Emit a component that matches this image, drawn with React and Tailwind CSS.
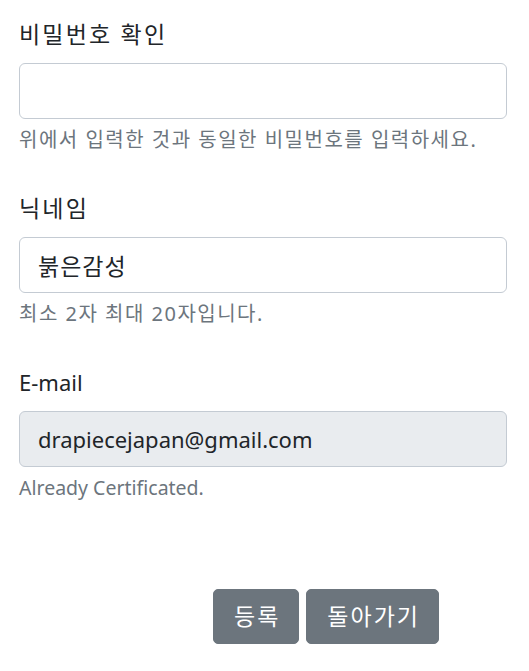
const font = { fontFamily: '"Noto Sans", "Noto Sans CJK KR", sans-serif' };

function Field({ label, value, help, disabled, latin, className = '' }) {
  return (
    <div className={className}>
      <label
        className={
          'mb-[12px] block leading-[34px] text-[#212529] ' +
          (latin ? 'text-[22px]' : 'text-[23px] tracking-[2.2px]')
        }
      >
        {label}
      </label>
      <input
        readOnly
        value={value}
        disabled={disabled}
        className={
          'block h-[56px] w-full rounded-[6px] border border-[#c4cbd3] px-[18px] text-[#212529] outline-none ' +
          (disabled ? 'bg-[#e9ecef] text-[22px]' : 'bg-white text-[23px] tracking-[1px]')
        }
      />
      <p
        className={
          'mt-[6px] leading-[29px] text-[#6c757d] ' +
          (latin ? 'text-[19.5px]' : 'text-[20px] tracking-[1.5px]')
        }
      >
        {help}
      </p>
    </div>
  );
}

export default function App() {
  return (
    <div className="min-h-[671px] bg-white px-[19px] pt-[17px]" style={font}>
      <div className="w-[488px]">
        <Field label="비밀번호 확인" value="" help="위에서 입력한 것과 동일한 비밀번호를 입력하세요." />
        <Field className="mt-[37px]" label="닉네임" value="붉은감성" help="최소 2자 최대 20자입니다." />
        <Field
          className="mt-[37px]"
          label="E-mail"
          value="drapiecejapan@gmail.com"
          help="Already Certificated."
          disabled
          latin
        />
        <div className="ml-[194px] mt-[87px] flex gap-[7px]">
          <button className="h-[55px] rounded-[5px] border border-[#6c757d] bg-[#6c757d] pl-[20px] pr-[18px] text-[23px] tracking-[2px] text-white">
            등록
          </button>
          <button className="h-[55px] rounded-[5px] border border-[#6c757d] bg-[#6c757d] pl-[20px] pr-[18px] text-[23px] tracking-[2px] text-white">
            돌아가기
          </button>
        </div>
      </div>
    </div>
  );
}
